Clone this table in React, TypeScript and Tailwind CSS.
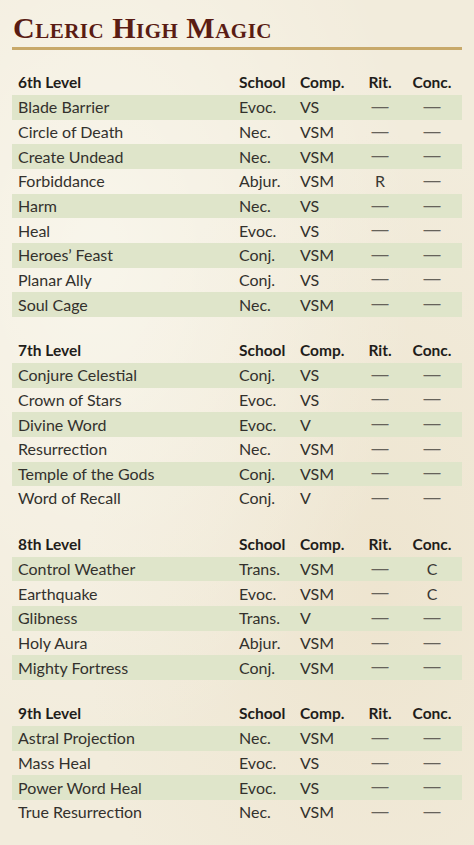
import React from "react";

type Spell = [string, string, string, string, string];

const sections: { level: string; spells: Spell[] }[] = [
  {
    level: "6th Level",
    spells: [
      ["Blade Barrier", "Evoc.", "VS", "—", "—"],
      ["Circle of Death", "Nec.", "VSM", "—", "—"],
      ["Create Undead", "Nec.", "VSM", "—", "—"],
      ["Forbiddance", "Abjur.", "VSM", "R", "—"],
      ["Harm", "Nec.", "VS", "—", "—"],
      ["Heal", "Evoc.", "VS", "—", "—"],
      ["Heroes’ Feast", "Conj.", "VSM", "—", "—"],
      ["Planar Ally", "Conj.", "VS", "—", "—"],
      ["Soul Cage", "Nec.", "VSM", "—", "—"],
    ],
  },
  {
    level: "7th Level",
    spells: [
      ["Conjure Celestial", "Conj.", "VS", "—", "—"],
      ["Crown of Stars", "Evoc.", "VS", "—", "—"],
      ["Divine Word", "Evoc.", "V", "—", "—"],
      ["Resurrection", "Nec.", "VSM", "—", "—"],
      ["Temple of the Gods", "Conj.", "VSM", "—", "—"],
      ["Word of Recall", "Conj.", "V", "—", "—"],
    ],
  },
  {
    level: "8th Level",
    spells: [
      ["Control Weather", "Trans.", "VSM", "—", "C"],
      ["Earthquake", "Evoc.", "VSM", "—", "C"],
      ["Glibness", "Trans.", "V", "—", "—"],
      ["Holy Aura", "Abjur.", "VSM", "—", "—"],
      ["Mighty Fortress", "Conj.", "VSM", "—", "—"],
    ],
  },
  {
    level: "9th Level",
    spells: [
      ["Astral Projection", "Nec.", "VSM", "—", "—"],
      ["Mass Heal", "Evoc.", "VS", "—", "—"],
      ["Power Word Heal", "Evoc.", "VS", "—", "—"],
      ["True Resurrection", "Nec.", "VSM", "—", "—"],
    ],
  },
];

const cols = "grid grid-cols-[227px_61px_56px_48px_56px] items-center h-[24.65px]";

// dash / R / C marks sit centred in the last two columns
function Mark({ v }: { v: string }) {
  if (v === "—")
    return <span className="text-center font-['Liberation_Sans',sans-serif] text-[17px] leading-none text-[#66625a] -translate-y-[1px]">—</span>;
  return <span className="text-center text-[#3a3834]">{v}</span>;
}

export default function App() {
  return (
    <div
      className="min-h-[845px] w-[474px] bg-[#f2ecdc] px-3 pt-[13px] pb-6 text-[16px] text-[#33312d]"
      style={{
        backgroundImage:
          "radial-gradient(ellipse at 20% 30%, rgba(255,255,250,0.5), transparent 60%), radial-gradient(ellipse at 80% 70%, rgba(230,215,185,0.35), transparent 55%)",
      }}
    >
      <h1 className="font-['Liberation_Serif',serif] text-[30px] leading-[30px] font-bold tracking-[0.5px] text-[#5a1c13] [font-variant:small-caps] pl-[1px]">
        Cleric High Magic
      </h1>
      <div className="mt-[4px] h-[2.5px] bg-[#c8a96a]" />

      <div className="mt-[21px] font-['Lato',sans-serif]">
        {sections.map((s, si) => (
          <div key={s.level} className={si > 0 ? "mt-[21.4px]" : ""}>
            <div className={`${cols} text-[15.5px] font-bold text-[#1f1d1a]`}>
              <span className="pl-[6px]">{s.level}</span>
              <span>School</span>
              <span>Comp.</span>
              <span className="text-center">Rit.</span>
              <span className="text-center">Conc.</span>
            </div>
            {s.spells.map((sp, i) => (
              <div key={sp[0]} className={`${cols} ${i % 2 === 0 ? "bg-[#dfe5ca]" : ""}`}>
                <span className="pl-[6px]">{sp[0]}</span>
                <span>{sp[1]}</span>
                <span>{sp[2]}</span>
                <Mark v={sp[3]} />
                <Mark v={sp[4]} />
              </div>
            ))}
          </div>
        ))}
      </div>
    </div>
  );
}
